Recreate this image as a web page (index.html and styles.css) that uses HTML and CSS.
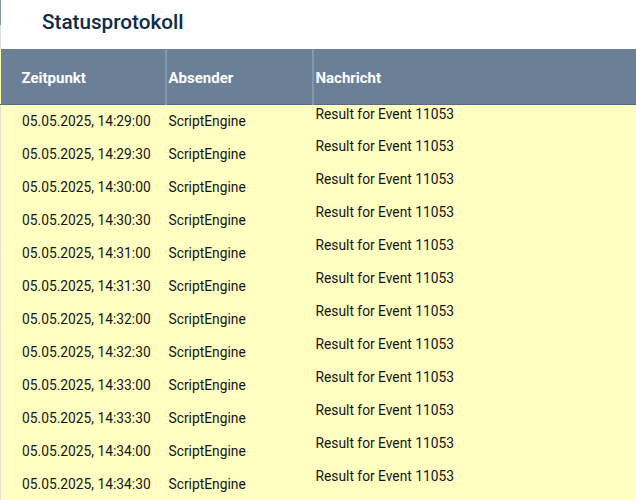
FILE: index.html
```html
<!DOCTYPE html>
<html lang="de">
<head>
<meta charset="utf-8">
<link rel="stylesheet" href="styles.css">
</head>
<body>
<div class="page">
  <div class="title-bar"><h1 class="title">Statusprotokoll</h1></div>
  <table class="log">
    <colgroup><col class="w1"><col class="w2"><col class="w3"></colgroup>
    <thead>
      <tr><th class="c1">Zeitpunkt</th><th class="c2">Absender</th><th class="c3">Nachricht</th></tr>
    </thead>
    <tbody>
      <tr><td class="c1">05.05.2025, 14:29:00</td><td class="c2">ScriptEngine</td><td class="c3">Result for Event 11053</td></tr>
      <tr><td class="c1">05.05.2025, 14:29:30</td><td class="c2">ScriptEngine</td><td class="c3">Result for Event 11053</td></tr>
      <tr><td class="c1">05.05.2025, 14:30:00</td><td class="c2">ScriptEngine</td><td class="c3">Result for Event 11053</td></tr>
      <tr><td class="c1">05.05.2025, 14:30:30</td><td class="c2">ScriptEngine</td><td class="c3">Result for Event 11053</td></tr>
      <tr><td class="c1">05.05.2025, 14:31:00</td><td class="c2">ScriptEngine</td><td class="c3">Result for Event 11053</td></tr>
      <tr><td class="c1">05.05.2025, 14:31:30</td><td class="c2">ScriptEngine</td><td class="c3">Result for Event 11053</td></tr>
      <tr><td class="c1">05.05.2025, 14:32:00</td><td class="c2">ScriptEngine</td><td class="c3">Result for Event 11053</td></tr>
      <tr><td class="c1">05.05.2025, 14:32:30</td><td class="c2">ScriptEngine</td><td class="c3">Result for Event 11053</td></tr>
      <tr><td class="c1">05.05.2025, 14:33:00</td><td class="c2">ScriptEngine</td><td class="c3">Result for Event 11053</td></tr>
      <tr><td class="c1">05.05.2025, 14:33:30</td><td class="c2">ScriptEngine</td><td class="c3">Result for Event 11053</td></tr>
      <tr><td class="c1">05.05.2025, 14:34:00</td><td class="c2">ScriptEngine</td><td class="c3">Result for Event 11053</td></tr>
      <tr><td class="c1">05.05.2025, 14:34:30</td><td class="c2">ScriptEngine</td><td class="c3">Result for Event 11053</td></tr>
    </tbody>
  </table>
</div>
</body>
</html>
```
FILE: styles.css
```css
html, body {
  margin: 0;
  padding: 0;
  background: #ffffff;
  overflow: hidden;
}
body {
  font-family: Roboto, "Liberation Sans", sans-serif;
  width: 636px;
  height: 500px;
}
.page {
  width: 636px;
}
.title-bar {
  height: 49px;
  border-left: 1px solid #d8dde2;
  box-sizing: border-box;
  position: relative;
}
.title-bar::before {
  content: "";
  position: absolute;
  left: -1px;
  top: 0;
  width: 1px;
  height: 25px;
  background: #8d9aa6;
}
.title {
  margin: 0;
  padding: 9px 0 0 41px;
  font-size: 20.7px;
  font-weight: 500;
  line-height: 26px;
  color: #0e2a4c;
}
.log {
  width: 636px;
  border-collapse: collapse;
  table-layout: fixed;
  background: #ffffc2;
}
.log col.w1 { width: 165px; }
.log col.w2 { width: 147px; }
.log col.w3 { width: 324px; }
.log th {
  box-sizing: border-box;
  height: 55px;
  background: #6b8096;
  color: #ffffff;
  font-size: 15px;
  font-weight: 700;
  text-align: left;
  padding: 3px 0 0 2px;
  border-left: 2px solid #8597ab;
  border-bottom: 1px solid #5a6d80;
}
.log th.c1 {
  border-left: none;
  padding-left: 21px;
}
.log td {
  box-sizing: border-box;
  height: 33px;
  padding: 1px 0 0 3px;
  font-size: 13.8px;
  line-height: 16px;
  color: #141414;
  vertical-align: middle;
}
.log td.c1 {
  padding-left: 21px;
  border-left: 1px solid #e2e2c6;
}
.log td.c2 {
  padding-left: 3px;
}
.log td.c3 {
  vertical-align: top;
  padding-top: 1px;
  padding-left: 3px;
}
```
